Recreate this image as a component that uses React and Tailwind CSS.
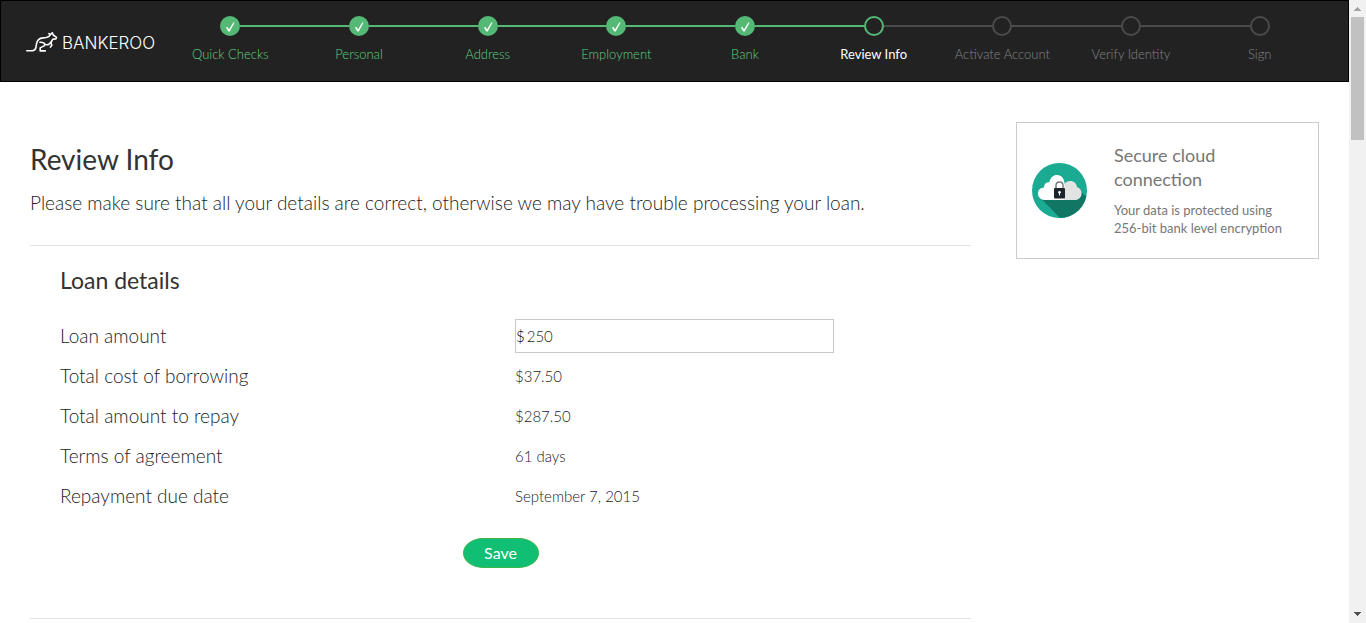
import { useState } from "react";

const STEPS = [
  { label: "Quick Checks", state: "done" },
  { label: "Personal", state: "done" },
  { label: "Address", state: "done" },
  { label: "Employment", state: "done" },
  { label: "Bank", state: "done" },
  { label: "Review Info", state: "current" },
  { label: "Activate Account", state: "todo" },
  { label: "Verify Identity", state: "todo" },
  { label: "Sign", state: "todo" },
];

const DETAILS = [
  ["Total cost of borrowing", "$37.50"],
  ["Total amount to repay", "$287.50"],
  ["Terms of agreement", "61 days"],
  ["Repayment due date", "September 7, 2015"],
];

const CIRCLE = {
  done: "border-[#55b976] bg-[#55b976]",
  current: "border-[#55b976]",
  todo: "border-[#4b4b4b]",
};

const LABEL = {
  done: "text-[#5fd083]",
  current: "text-white font-normal",
  todo: "text-[#858585]",
};

const LINE = {
  done: "bg-[#55b976]",
  current: "bg-[#4b4b4b]",
  todo: "bg-[#4b4b4b]",
};

function Logo() {
  return (
    <a href="#home" className="flex w-[165px] shrink-0 items-center gap-1 pt-1 pl-[25px] text-white">
      <svg viewBox="0 0 32 22" className="h-[22px] w-8 shrink-0" fill="none" stroke="currentColor" strokeWidth="1.6" strokeLinejoin="round" strokeLinecap="round" aria-hidden="true">
        <path d="M.8 18.7H6.2C8.6 18.7 9.5 17.6 9.9 15.6L10.5 11.8C11.1 8.4 13.4 6.2 17 5.9L20.2 5.5C22.2 5.1 23.6 4 24.3 2.8L23 1.6M24.3 2.8L26.3 .8L27.2 3L30.5 5.3L29.9 6.9L26.7 7.3L25.1 10.2L22.9 12.2C21.5 13 20 12.8 18.8 12.1" />
        <path d="M24.9 10.3L25.8 13.2L24.4 15.1M13.9 10.3C17.5 10 19.5 12 18.6 13.6L14.2 15.9V18.9H19.3" />
      </svg>
      <span className="text-[17px] leading-6 font-light font-['Inter',sans-serif]">BANKEROO</span>
    </a>
  );
}

function Header() {
  return (
    <header className="flex border border-black bg-[#222222] pr-6">
      <Logo />
      <ol className="grid flex-1 grid-cols-9 pt-[15px] pb-[17px]">
        {STEPS.map(({ label, state }, i) => (
          <li key={label} className="flex flex-col items-center gap-2">
            <div className="flex w-full items-center">
              <span className={`h-[2px] flex-1 ${i === 0 ? "bg-transparent" : LINE[STEPS[i - 1].state]}`} />
              <span className={`flex size-5 items-center justify-center rounded-full border-2 ${CIRCLE[state]}`}>
                {state === "done" && (
                  <svg viewBox="0 0 16 16" className="size-4 shrink-0" fill="#fff" aria-hidden="true">
                    <path d="M3.9 9.6L5.5 9.1L7 11.5L11.3 4.6L12.6 4.4L7.7 13.5H6.4Z" />
                  </svg>
                )}
              </span>
              <span className={`h-[2px] flex-1 ${i === STEPS.length - 1 ? "bg-transparent" : LINE[state]}`} />
            </div>
            <span className={`text-[13px] leading-5 whitespace-nowrap ${LABEL[state]}`}>{label}</span>
          </li>
        ))}
      </ol>
    </header>
  );
}

function CloudLock() {
  return (
    <svg viewBox="0 0 55 55" className="size-[55px] shrink-0" aria-hidden="true">
      <defs>
        <clipPath id="disc">
          <circle cx="27.5" cy="27.5" r="27.5" />
        </clipPath>
      </defs>
      <circle cx="27.5" cy="27.5" r="27.5" fill="#1aab92" />
      <path clipPath="url(#disc)" d="M8 34.5L29 56H55V34L47.5 28L45 36Z" fill="#0f7763" />
      <path d="M31 37V23C33 19 36 18 38.5 18C42 18 44.5 20.5 45 24C48 25 49.5 27.5 49.5 30.5C49.5 34.5 46.5 37 43 37Z" fill="#e2e4e3" />
      <path d="M12.5 37C8.5 37 6 34 6 30.5C6 27 8.5 24.6 12 24.5C12 21 14 19 17.3 19.3C18.3 14.7 21.2 12 25 12C29 12 32 15 32.5 19.5L32 37Z" fill="#fff" />
      <path d="M24 26V22.5C24 20.3 25.5 19 27.5 19C29.5 19 31 20.3 31 22.5V26" fill="none" stroke="#777b80" strokeWidth="1.5" />
      <rect x="22" y="25" width="11" height="10.5" rx="1" fill="#1e242c" />
      <circle cx="27.5" cy="29.3" r="1.3" fill="#fff" />
      <path d="M27.5 29V32.5" stroke="#fff" strokeWidth="1" />
    </svg>
  );
}

function Scrollbar() {
  return (
    <div className="flex w-[17px] shrink-0 flex-col items-center bg-[#f1f1f1]" aria-hidden="true">
      <svg viewBox="0 0 17 17" className="size-[17px]" fill="#a3a3a3" shapeRendering="crispEdges">
        <path d="M5 11L8.5 7L12 11Z" />
      </svg>
      <div className="h-[123px] w-[13px] bg-[#c1c1c1]" />
      <svg viewBox="0 0 17 17" className="mt-auto size-[17px]" fill="#505050" shapeRendering="crispEdges">
        <path d="M5 6L8.5 10L12 6Z" />
      </svg>
    </div>
  );
}

export default function App() {
  const [amount, setAmount] = useState("250");

  return (
    <div className="flex min-h-screen bg-white font-light text-[#222222] font-['Lato',sans-serif]">
      <div className="min-w-0 flex-1">
        <Header />
        <div className="flex items-start gap-[45px] px-[30px] pt-10">
          <main className="min-w-0 flex-1 pt-5">
            <h1 className="text-[28px] leading-[34px] font-normal text-[#333333]">Review Info</h1>
            <p className="mt-[15px] text-[19px] leading-6">
              Please make sure that all your details are correct, otherwise we may have trouble processing your loan.
            </p>
            <form
              className="mt-[30px] border-y border-[#e3e3e3] px-[30px] pt-[18px] pb-[50px]"
              onSubmit={(e) => e.preventDefault()}
            >
              <h2 className="text-[23px] leading-8 font-normal text-[#333333]">Loan details</h2>
              <div className="mt-5 grid grid-cols-[455px_1fr] items-center">
                <label htmlFor="amount" className="text-[19px] leading-10">Loan amount</label>
                <div className="flex h-[34px] w-[319px] items-center gap-[2px] border border-[#c8c8c8] text-[15px]">
                  <span className="text-black">$</span>
                  <input
                    id="amount"
                    value={amount}
                    onChange={(e) => setAmount(e.target.value)}
                    className="min-w-0 flex-1 text-[#222222] outline-none"
                  />
                </div>
              </div>
              <dl>
                {DETAILS.map(([name, value]) => (
                  <div key={name} className="grid grid-cols-[455px_1fr] leading-10">
                    <dt className="text-[19px]">{name}</dt>
                    <dd className="text-[15px]">{value}</dd>
                  </div>
                ))}
              </dl>
              <div className="mt-[22px] flex justify-center">
                <button
                  type="submit"
                  className="h-[30px] w-[76px] rounded-[20px/15px] border border-[#3cb54a] bg-[#10bf73] text-base leading-6 font-normal text-white"
                >
                  Save
                </button>
              </div>
            </form>
          </main>
          <aside className="flex w-[303px] shrink-0 items-center gap-[27px] border border-[#cccccc] px-[15px] pt-5 pb-[21px] font-normal text-[#777777]">
            <CloudLock />
            <div>
              <h3 className="w-32 text-lg leading-6">Secure cloud connection</h3>
              <p className="mt-[10px] text-[13px] leading-[18px]">
                Your data is protected using
                <br />
                256-bit bank level encryption
              </p>
            </div>
          </aside>
        </div>
      </div>
      <Scrollbar />
    </div>
  );
}
